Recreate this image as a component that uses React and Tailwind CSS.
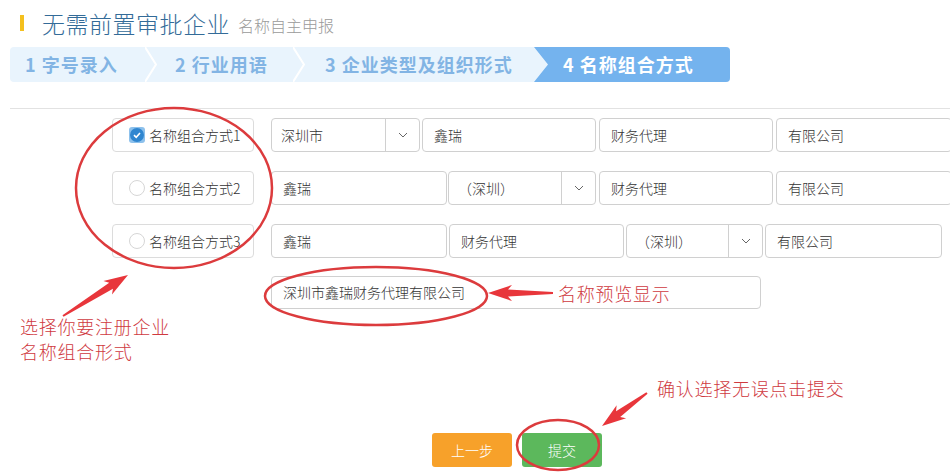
import React from "react";

/* ============ helpers ============ */
function arrowPoints(x1, y1, x2, y2, tail = 1, neck = 3.5, head = 8, headLen = 20) {
  const dx = x2 - x1;
  const dy = y2 - y1;
  const len = Math.hypot(dx, dy);
  const ux = dx / len;
  const uy = dy / len;
  const nx = -uy;
  const ny = ux;
  const bx = x2 - ux * headLen;
  const by = y2 - uy * headLen;
  const hx = x2 - ux * (headLen + 4);
  const hy = y2 - uy * (headLen + 4);
  const pts = [
    [x1 + nx * tail, y1 + ny * tail],
    [bx + nx * neck, by + ny * neck],
    [hx + nx * head, hy + ny * head],
    [x2, y2],
    [hx - nx * head, hy - ny * head],
    [bx - nx * neck, by - ny * neck],
    [x1 - nx * tail, y1 - ny * tail],
  ];
  return pts.map((p) => p.join(",")).join(" ");
}

function Chevron() {
  return (
    <svg width="12" height="35" viewBox="0 0 12 35" className="shrink-0">
      <polyline points="0,0 11,17.5 0,35" fill="none" stroke="#ffffff" strokeWidth="2" />
    </svg>
  );
}

function Caret() {
  return (
    <svg width="10" height="6" viewBox="0 0 10 6">
      <polyline points="1,1 5,5 9,1" fill="none" stroke="#666" strokeWidth="1" />
    </svg>
  );
}

function Field({ className, children }) {
  return (
    <div className={`flex h-[34px] shrink-0 items-center rounded-[4px] border border-[#d0d0d0] pl-[11px] text-[14px] text-[#333] ${className}`}>
      {children}
    </div>
  );
}

function Select({ className, children }) {
  return (
    <div className={`flex h-[34px] shrink-0 items-stretch rounded-[4px] border border-[#d0d0d0] text-[14px] text-[#333] ${className}`}>
      <div className="flex flex-1 items-center pl-[9px]">{children}</div>
      <div className="flex w-[34px] items-center justify-center border-l border-[#d0d0d0]">
        <Caret />
      </div>
    </div>
  );
}

function Label({ checked, text }) {
  return (
    <div className="ml-[112px] flex h-[34px] w-[142px] shrink-0 items-center gap-[4px] rounded-[4px] border border-[#dcdcdc] pl-[16px] text-[14px] text-[#333]">
      {checked ? (
        <span className="flex h-[16px] w-[16px] items-center justify-center rounded-[3px] bg-[#8dc1ec]">
          <svg width="14" height="14" viewBox="0 0 14 14">
            <circle cx="7" cy="7" r="7" fill="#2f86d0" />
            <polyline points="4,7.2 6.2,9.3 10,5" fill="none" stroke="#fff" strokeWidth="1.6" />
          </svg>
        </span>
      ) : (
        <span className="h-[16px] w-[16px] rounded-full border border-[#d6d6d6] bg-white" />
      )}
      <span>{text}</span>
    </div>
  );
}

/* ============ PAGE ============ */
export default function App() {
  const red = "#dc3b3d";
  return (
    <div className="relative h-[472px] w-[950px] overflow-hidden bg-white pt-[10px] font-['Noto_Sans_CJK_SC',sans-serif] font-light">
      {/* title */}
      <div className="flex h-[26px] items-center">
        <span className="ml-[20px] h-[16px] w-[4px] bg-[#f4c01e]" />
        <span className="ml-[18px] text-[23px] leading-none tracking-[0.5px] text-[#336b98]">无需前置审批企业</span>
        <span className="ml-[8px] mt-[4px] text-[16px] leading-none text-[#9a9a9a]">名称自主申报</span>
      </div>

      {/* steps */}
      <div className="ml-[10px] mt-[11px] flex h-[35px] w-[720px] rounded-[4px] bg-[#e9f4fd] text-[18px] font-bold tracking-[1px] text-[#82b4e4]">
        <div className="flex w-[135px] items-center pl-[15px]">1 字号录入</div>
        <Chevron />
        <div className="flex w-[136px] items-center pl-[18px]">2 行业用语</div>
        <Chevron />
        <div className="flex w-[229px] items-center pl-[20px]">3 企业类型及组织形式</div>
        <div className="flex w-[196px] items-center rounded-r-[4px] bg-[#74b3ee] pl-[29px] text-white [clip-path:polygon(0_0,100%_0,100%_100%,0_100%,14px_50%)]">
          4 名称组合方式
        </div>
      </div>

      {/* divider */}
      <div className="ml-[10px] mt-[26px] h-px bg-[#e2e2e2]" />

      {/* rows */}
      <div className="mt-[9px] flex">
        <Label checked text="名称组合方式1" />
        <Select className="ml-[17px] w-[149px]">深圳市</Select>
        <Field className="ml-[2px] w-[174px]">鑫瑞</Field>
        <Field className="ml-[3px] w-[174px]">财务代理</Field>
        <Field className="ml-[3px] w-[176px]">有限公司</Field>
      </div>
      <div className="mt-[19px] flex">
        <Label text="名称组合方式2" />
        <Field className="ml-[17px] w-[176px]">鑫瑞</Field>
        <Select className="ml-[1px] w-[148px]">（深圳）</Select>
        <Field className="ml-[3px] w-[174px]">财务代理</Field>
        <Field className="ml-[3px] w-[176px]">有限公司</Field>
      </div>
      <div className="mt-[19px] flex">
        <Label text="名称组合方式3" />
        <Field className="ml-[17px] w-[176px]">鑫瑞</Field>
        <Field className="ml-[2px] w-[175px]">财务代理</Field>
        <Select className="ml-[2px] w-[137px]">（深圳）</Select>
        <Field className="ml-[2px] w-[177px]">有限公司</Field>
      </div>

      {/* preview */}
      <div className="ml-[271px] mt-[18px] flex h-[33px] w-[490px] items-center rounded-[4px] border border-[#d0d0d0] pl-[11px] text-[14px] text-[#333]">
        深圳市鑫瑞财务代理有限公司
      </div>

      {/* buttons */}
      <div className="ml-[432px] mt-[124px] flex gap-[10px]">
        <button className="h-[34px] w-[80px] rounded-[3px] bg-[#f7a12a] text-[14px] text-white">上一步</button>
        <button className="h-[34px] w-[80px] rounded-[3px] bg-[#5cb85c] text-[14px] text-white">提交</button>
      </div>

      {/* annotations overlay */}
      <svg className="pointer-events-none absolute inset-0" width="950" height="472" viewBox="0 0 950 472">
        <ellipse cx="174" cy="188" rx="98" ry="80" fill="none" stroke={red} strokeWidth="2.5" />
        <ellipse cx="376" cy="296" rx="111" ry="29" fill="none" stroke={red} strokeWidth="2.5" />
        <ellipse cx="558" cy="445" rx="41" ry="25" fill="none" stroke={red} strokeWidth="2.5" />
        <polygon points={arrowPoints(63, 316, 128, 275)} fill="#e8363b" />
        <polygon points={arrowPoints(553, 293, 488, 293)} fill="#e8363b" />
        <polygon points={arrowPoints(647, 393, 602, 426)} fill="#e8363b" />
      </svg>
      <div className="absolute left-[20px] top-[314px] text-[18px] leading-[25px] tracking-[0.75px] text-[#cf3a3f]">
        选择你要注册企业
        <br />
        名称组合形式
      </div>
      <div className="absolute left-[558px] top-[281px] text-[18px] leading-[25px] tracking-[0.75px] text-[#cf3a3f]">
        名称预览显示
      </div>
      <div className="absolute left-[657px] top-[376px] text-[18px] leading-[25px] tracking-[0.75px] text-[#cf3a3f]">
        确认选择无误点击提交
      </div>
    </div>
  );
}
